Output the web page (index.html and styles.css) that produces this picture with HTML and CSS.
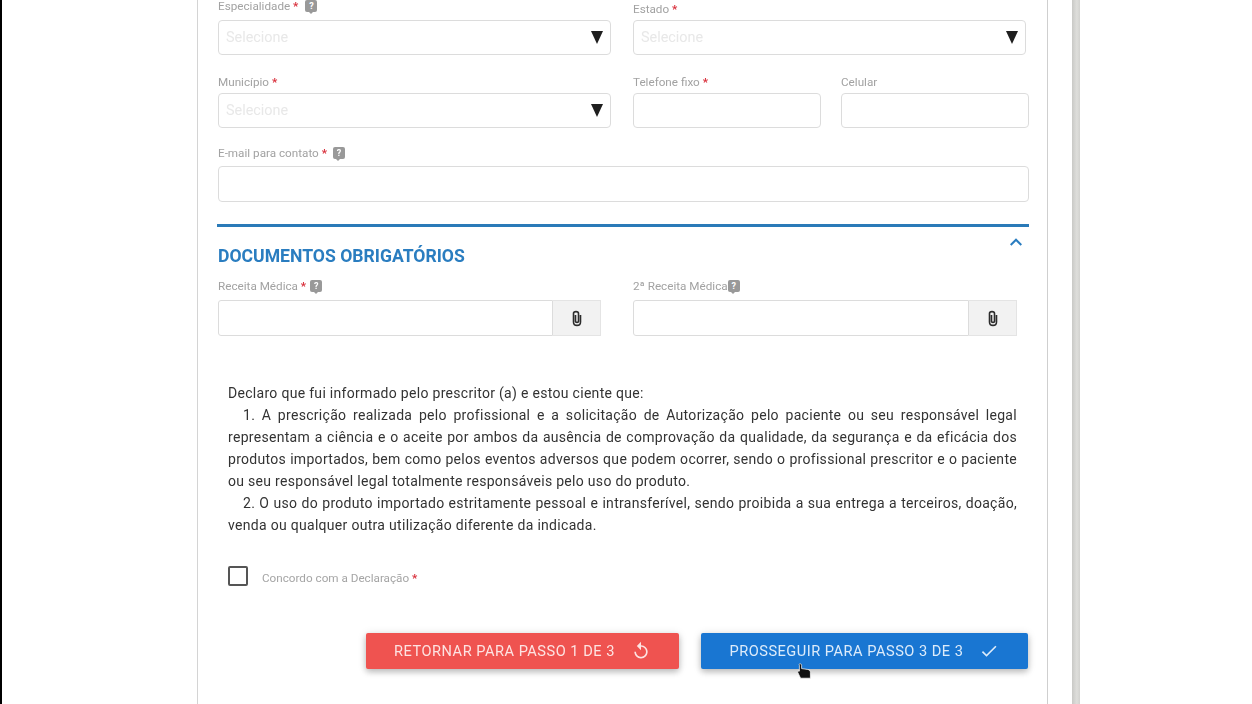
FILE: index.html
```html
<!DOCTYPE html>
<html lang="pt-BR">
<head>
<meta charset="utf-8">
<title>Solicitação de Autorização</title>
<link rel="stylesheet" href="styles.css">
</head>
<body>
<div class="page">
  <main class="card">
    <form class="form">
      <div class="row">
        <div class="field w393">
          <label class="label label-top">Especialidade <b class="req">*</b> <span class="help help-wide">?</span></label>
          <div class="select"><span class="placeholder">Selecione</span><svg class="caret" viewBox="0 0 12 13"><path d="M0 0H12L6 13Z"/></svg></div>
        </div>
        <div class="field w393">
          <label class="label label-low">Estado <b class="req">*</b></label>
          <div class="select"><span class="placeholder">Selecione</span><svg class="caret" viewBox="0 0 12 13"><path d="M0 0H12L6 13Z"/></svg></div>
        </div>
      </div>
      <div class="row">
        <div class="field w393">
          <label class="label label-mid">Município <b class="req">*</b></label>
          <div class="select"><span class="placeholder">Selecione</span><svg class="caret" viewBox="0 0 12 13"><path d="M0 0H12L6 13Z"/></svg></div>
        </div>
        <div class="field w188">
          <label class="label label-mid">Telefone fixo <b class="req">*</b></label>
          <input class="input" type="text">
        </div>
        <div class="field w188 narrow-gap">
          <label class="label label-mid">Celular</label>
          <input class="input" type="text">
        </div>
      </div>
      <div class="field w811 email">
        <label class="label label-up">E-mail para contato <b class="req">*</b> <span class="help help-mid">?</span></label>
        <input class="input tall" type="text">
      </div>

      <section class="section">
        <header class="section-head">
          <h2 class="section-title">DOCUMENTOS OBRIGATÓRIOS</h2>
          <svg class="chevron" viewBox="6 8 12 7.41"><path d="M7.41 15.41L12 10.83l4.59 4.58L18 14l-6-6-6 6z"/></svg>
        </header>
        <div class="row files">
          <div class="field w383">
            <label class="label label-top">Receita Médica <b class="req">*</b> <span class="help help-gap">?</span></label>
            <div class="file"><input class="input file-input" type="text"><span class="addon"><svg class="clip" viewBox="0 0 10 17"><path d="M3.5 5V11.5C3.5 12.8 6.5 12.8 6.5 11.5V3.5C6.5 1 1.5 1 1.5 3.5V12C1.5 16.5 8.5 16.5 8.5 12V5"/></svg></span></div>
          </div>
          <div class="field w384">
            <label class="label label-top">2ª Receita Médica<span class="help">?</span></label>
            <div class="file"><input class="input file-input" type="text"><span class="addon"><svg class="clip" viewBox="0 0 10 17"><path d="M3.5 5V11.5C3.5 12.8 6.5 12.8 6.5 11.5V3.5C6.5 1 1.5 1 1.5 3.5V12C1.5 16.5 8.5 16.5 8.5 12V5"/></svg></span></div>
          </div>
        </div>
      </section>

      <div class="declaration">
        <p class="decl-intro">Declaro que fui informado pelo prescritor (a) e estou ciente que:</p>
        <p class="decl-item">1. A prescrição realizada pelo profissional e a solicitação de Autorização pelo paciente ou seu responsável legal representam a ciência e o aceite por ambos da ausência de comprovação da qualidade, da segurança e da eficácia dos produtos importados, bem como pelos eventos adversos que podem ocorrer, sendo o profissional prescritor e o paciente ou seu responsável legal totalmente responsáveis pelo uso do produto.</p>
        <p class="decl-item">2. O uso do produto importado estritamente pessoal e intransferível, sendo proibida a sua entrega a terceiros, doação, venda ou qualquer outra utilização diferente da indicada.</p>
      </div>

      <div class="agree">
        <span class="checkbox"></span>
        <span class="agree-label">Concordo com a Declaração <b class="req">*</b></span>
      </div>

      <div class="actions">
        <button class="btn btn-back" type="button">RETORNAR PARA PASSO 1 DE 3<svg class="btn-icon" viewBox="0 0 24 24"><path d="M12 5V1L7 6l5 5V7c3.31 0 6 2.69 6 6s-2.69 6-6 6-6-2.69-6-6H4c0 4.42 3.58 8 8 8s8-3.58 8-8-3.58-8-8-8z"/></svg></button>
        <button class="btn btn-next" type="button">PROSSEGUIR PARA PASSO 3 DE 3<svg class="btn-icon" viewBox="0 0 24 24"><path d="M9 16.17L4.83 12l-1.42 1.41L9 19 21 7l-1.41-1.41z"/></svg></button>
      </div>
    </form>
  </main>
  <div class="scrollbar"></div>
  <svg class="cursor" viewBox="0 0 14 16"><path d="M3 .8C4 .8 4.6 1.4 4.6 2.2V5.6L10.5 6.4C12.4 6.8 13.4 7.6 13.4 9.5V15.2H3.6L.8 9.5C.5 8.6 1.4 7.6 2.4 8.2V2.2C1.8 1.4 2.2 .8 3 .8Z"/></svg>
</div>
</body>
</html>
```
FILE: styles.css
```css
* { box-sizing: border-box; }
html, body { margin: 0; height: 100%; background: #fff; }
body { font-family: Roboto, "Liberation Sans", sans-serif; overflow: hidden; }

.page {
  position: relative;
  display: flex;
  width: 1252px;
  height: 704px;
  overflow: hidden;
  background: #fff;
  border-left: 2px solid #000;
  padding-left: 195px;
}
.card {
  width: 851px;
  height: 704px;
  flex: none;
  border-left: 1px solid #d4d4d4;
  border-right: 1px solid #cfcfcf;
  padding-left: 20px;
  filter: blur(.35px);
}
.scrollbar {
  width: 8px;
  flex: none;
  margin-left: 24px;
  background: linear-gradient(90deg, #c9c9c6, #dededb 60%, #d2d2cf);
}
.form { display: flex; flex-direction: column; width: 812px; }

.row { display: flex; gap: 22px; margin-bottom: 18px; }
.field { display: flex; flex-direction: column; flex: none; }
.w393 { width: 393px; }
.w188 { width: 188px; }
.w811 { width: 811px; }
.w383 { width: 383px; }
.w384 { width: 384px; }
.narrow-gap { margin-left: -2px; }

.label {
  display: flex;
  align-items: center;
  height: 20px;
  font-size: 11.7px;
  color: #a2a2a2;
  white-space: pre;
}
.label-top { padding-bottom: 8px; }
.label-up { padding-bottom: 6px; }
.label-mid { padding-bottom: 3px; }
.label-low { padding-bottom: 2px; }
.req { color: #d9303c; font-weight: 700; }
.help {
  position: relative;
  display: inline-flex;
  align-items: center;
  justify-content: center;
  width: 12px;
  height: 12px;
  border-radius: 2px;
  background: #999;
  color: #fff;
  font-size: 9px;
  font-weight: 700;
  line-height: 1;
}
.help::after {
  content: "";
  position: absolute;
  left: 3.5px;
  bottom: -2px;
  border-style: solid;
  border-width: 2px 2.5px 0;
  border-color: #999 transparent transparent;
}
.help-gap { margin-left: 4px; }
.help-mid { margin-left: 6px; }
.help-wide { margin-left: 7px; }

.select, .input {
  height: 35px;
  border: 1px solid #dcdcdc;
  border-radius: 4px;
  background: #fff;
  outline: none;
  font: 14px Roboto, sans-serif;
}
.input { display: block; width: 100%; }
.tall { height: 36px; }
.select {
  display: flex;
  align-items: center;
  justify-content: space-between;
  padding: 0 7px;
}
.placeholder { font-size: 14.4px; color: #e8e8e8; line-height: 20px; margin-top: 1px; }
.caret { width: 12px; height: 13px; fill: #1f1f1f; }

.email { margin-bottom: 22px; }
.section { border-top: 3px solid #2a7ab8; margin: 0 1px 0 -1px; padding-left: 1px; }
.section-head {
  display: flex;
  justify-content: space-between;
  align-items: flex-start;
  height: 53px;
  margin-left: -1px;
  padding-right: 7px;
}
.section-title {
  margin: 19px 0 0 1px;
  font-size: 17.6px;
  line-height: 20px;
  font-weight: 700;
  color: #2a7dc0;
}
.chevron { width: 12px; height: 8px; margin-top: 11px; fill: #2a7dc0; }

.files { margin-bottom: 46px; gap: 32px; }
.file { display: flex; height: 36px; }
.file-input { flex: 1; height: 36px; border-radius: 3px 0 0 3px; min-width: 0; }
.addon {
  display: flex;
  align-items: center;
  justify-content: center;
  width: 48px;
  flex: none;
  background: #f2f2f2;
  border: 1px solid #e4e4e4;
  border-left: 0;
}
.clip { width: 10px; height: 17px; fill: none; stroke: #2c2c2c; stroke-width: 1.6; }

.declaration {
  margin-left: 10px;
  width: 789px;
  font-size: 14px;
  letter-spacing: .3px;
  line-height: 22px;
  color: #333;
  text-align: justify;
}
.declaration p { margin: 0; }
.decl-item { text-indent: 15px; }

.agree { display: flex; align-items: center; margin: 30px 0 47px 10px; height: 20px; }
.checkbox {
  width: 20px;
  height: 20px;
  border: 2px solid #555;
  border-radius: 2px;
  flex: none;
}
.agree-label { margin-left: 14px; font-size: 11.7px; color: #a5a5a5; padding-top: 4px; }

.actions { display: flex; justify-content: flex-end; gap: 22px; padding-right: 2px; }
.btn {
  display: flex;
  align-items: center;
  justify-content: center;
  height: 36px;
  border: 0;
  border-radius: 2px;
  color: #fff;
  font: 400 14.6px Roboto, sans-serif;
  letter-spacing: 0.5px;
  box-shadow: 0 3px 6px rgba(0,0,0,.22), 0 1px 10px rgba(0,0,0,.12);
}
.btn-back { width: 313px; background: #ef5350; color: #fde3e2; }
.btn-next { width: 327px; background: #1976d2; color: #dcebfa; }
.btn-icon { width: 20px; height: 20px; fill: currentColor; margin-left: 16px; }

.cursor {
  position: absolute;
  left: 795px;
  top: 663px;
  width: 14px;
  height: 16px;
  fill: #111;
  stroke: #fff;
  stroke-width: .7;
}
```
